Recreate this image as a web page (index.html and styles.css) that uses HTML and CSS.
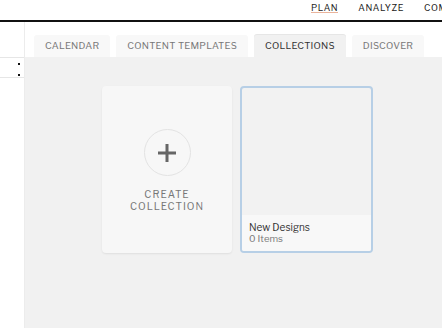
FILE: index.html
```html
<!DOCTYPE html>
<html>
<head>
<meta charset="utf-8">
<link rel="stylesheet" href="styles.css">
</head>
<body>
<header class="topbar">
  <nav class="topnav">
    <span class="navitem active">PLAN</span>
    <span class="navitem">ANALYZE</span>
    <span class="navitem">COMMUNITY</span>
  </nav>
</header>
<div class="layout">
  <aside class="sidebar">
    <div class="siderow"><span class="dot"></span><span class="dot"></span></div>
  </aside>
  <main class="main">
    <div class="tabs">
      <div class="tab">CALENDAR</div>
      <div class="tab">CONTENT TEMPLATES</div>
      <div class="tab active">COLLECTIONS</div>
      <div class="tab">DISCOVER</div>
    </div>
    <section class="content">
      <div class="card create">
        <div class="pluscircle">
          <svg width="20" height="20" viewBox="0 0 20 20"><path d="M10 1V19M1 10H19" stroke="#666" stroke-width="3"/></svg>
        </div>
        <div class="createlabel">CREATE<br>COLLECTION</div>
      </div>
      <div class="card collection">
        <div class="thumb"></div>
        <div class="info">
          <div class="cname">New Designs</div>
          <div class="ccount">0 Items</div>
        </div>
      </div>
    </section>
  </main>
</div>
</body>
</html>
```
FILE: styles.css
```css
* { box-sizing: border-box; }
html, body { margin: 0; padding: 0; }
body {
  width: 442px;
  height: 328px;
  overflow: hidden;
  font-family: "Libre Franklin", "Liberation Sans", Arial, sans-serif;
  background: #fff;
}
.topbar {
  height: 22px;
  border-bottom: 2px solid #111;
  display: flex;
  justify-content: flex-start;
  padding-left: 311px;
  overflow: hidden;
  white-space: nowrap;
}
.topnav { display: flex; gap: 20px; }
.navitem {
  font-size: 9px;
  letter-spacing: 0.6px;
  color: #222;
  line-height: 14px;
  padding-top: 1px;
}
.navitem.active {
  border-bottom: 1px solid #e9b49c;
  height: 13px;
}
.layout {
  display: flex;
  height: 306px;
}
.sidebar {
  width: 25px;
  border-right: 1px solid #ececec;
  padding-top: 35px;
  flex-shrink: 0;
}
.siderow {
  height: 21px;
  border-top: 1px solid #e6e6e6;
  border-bottom: 1px solid #e6e6e6;
  display: flex;
  flex-direction: column;
  align-items: flex-end;
  padding: 5px 4px 0 0;
  gap: 9px;
}
.dot {
  width: 2px;
  height: 2px;
  background: #111;
}
.main {
  flex: 1;
  display: flex;
  flex-direction: column;
  min-width: 0;
}
.tabs {
  display: flex;
  gap: 6px;
  padding: 13px 0 0 9px;
  white-space: nowrap;
}
.tab {
  height: 22px;
  padding: 0 11px;
  background: #f8f8f8;
  border-radius: 3px 3px 0 0;
  font-size: 9.5px;
  letter-spacing: 0.25px;
  color: #777;
  line-height: 22px;
}
.tab.active {
  background: #f1f1f1;
  color: #333;
  box-shadow: 0 -1px 0 #e6e6e6;
}
.content {
  flex: 1;
  background: #f1f1f1;
  display: flex;
  gap: 8px;
  padding: 29px 0 0 77px;
  align-items: flex-start;
}
.card {
  border-radius: 4px;
  height: 167px;
}
.create {
  width: 130px;
  background: #f7f7f7;
  box-shadow: 0 1px 2px rgba(0,0,0,0.08);
  display: flex;
  flex-direction: column;
  align-items: center;
  padding-top: 43px;
}
.pluscircle {
  width: 47px;
  height: 47px;
  border-radius: 50%;
  border: 1px solid #e3e3e3;
  display: flex;
  align-items: center;
  justify-content: center;
}
.createlabel {
  margin-top: 12px;
  font-size: 10px;
  letter-spacing: 1px;
  line-height: 12px;
  color: #777;
  text-align: center;
}
.collection {
  width: 133px;
  border: 2px solid #b7cfe6;
  background: #f2f2f2;
  display: flex;
  flex-direction: column;
  overflow: hidden;
}
.thumb { flex: 1; }
.info {
  height: 36px;
  background: #f8f8f8;
  padding: 6px 0 0 7px;
}
.cname {
  font-size: 10px;
  color: #333;
  line-height: 12px;
}
.ccount {
  font-size: 9.5px;
  color: #777;
  line-height: 11px;
}
```
